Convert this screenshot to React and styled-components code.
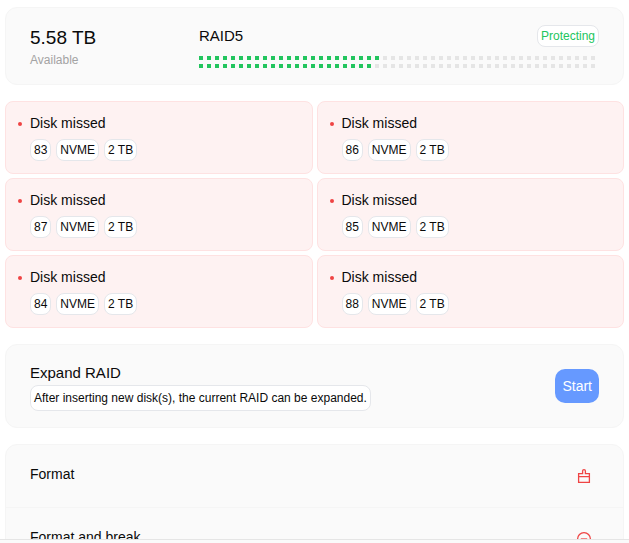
import styled, { createGlobalStyle } from 'styled-components';

const GlobalStyle = createGlobalStyle`
  * {
    box-sizing: border-box;
  }

  body {
    margin: 0;
    background: #ffffff;
    color: #0a0a0a;
    font-family: 'Liberation Sans', Arial, Helvetica, sans-serif;
    font-size: 14px;
    line-height: 20px;
  }

  h2, h3, p, ul {
    margin: 0;
    padding: 0;
    font-weight: 400;
  }

  button {
    border: 0;
    font: inherit;
    cursor: pointer;
  }
`;

const Page = styled.div`
  display: flex;
  flex-direction: column;
  height: 100vh;
`;

const Content = styled.main`
  flex: 1;
  min-height: 0;
  overflow: hidden;
  display: flex;
  flex-direction: column;
  gap: 16px;
  padding: 7px 5px 0;

  > * {
    flex-shrink: 0;
  }
`;

const BottomBar = styled.footer`
  height: 4px;
  border-top: 1px solid #e5e5e5;
  background: #fafafa;
`;

const Card = styled.section`
  border: 1px solid #f5f5f5;
  border-radius: 12px;
  background: #fafafa;
`;

const SummaryCard = styled(Card)`
  display: grid;
  grid-template-columns: 169px 1fr;
  padding: 16px 24px;
`;

const Capacity = styled.h2`
  font-size: 19px;
  line-height: 28px;
`;

const Caption = styled.p`
  color: #a3a3a3;
  font-size: 12px;
  line-height: 16px;
`;

const SummaryHeader = styled.div`
  display: flex;
  justify-content: space-between;
  align-items: center;
`;

const Title = styled.h3`
  font-size: 15px;
  line-height: 24px;
`;

const Tag = styled.span`
  display: inline-block;
  padding: 0 3px;
  border: 1px solid #e5e7eb;
  border-radius: 8px;
  background: #ffffff;
  color: ${({ $color }) => $color || 'inherit'};
  font-size: 12px;
  line-height: ${({ $tall }) => ($tall ? '24px' : '20px')};
`;

const UsageGrid = styled.div`
  display: grid;
  grid-template-rows: 4px 4px;
  grid-auto-flow: column;
  grid-auto-columns: 1fr;
  row-gap: 4px;
  margin-top: 8px;
`;

const UsageCell = styled.span`
  width: 4px;
  background: ${({ $used }) => ($used ? '#22c55e' : '#e5e5e5')};
`;

const DiskGrid = styled.ul`
  display: grid;
  grid-template-columns: 1fr 1fr;
  gap: 4px;
  list-style: none;
`;

const DiskCard = styled.li`
  display: flex;
  gap: 8px;
  padding: 12px;
  border: 1px solid #fee2e2;
  border-radius: 8px;
  background: #fef2f2;
`;

const StatusDot = styled.span`
  width: 4px;
  height: 4px;
  margin-top: 8px;
  border-radius: 50%;
  background: #ef4444;
`;

const DiskName = styled.h3`
  font-size: 14px;
  line-height: 18px;
`;

const TagList = styled.div`
  display: flex;
  gap: 5px;
  margin-top: 7px;
`;

const ExpandCard = styled(Card)`
  display: flex;
  justify-content: space-between;
  align-items: center;
  padding: 16px 24px;
`;

const StartButton = styled.button`
  padding: 7px;
  border-radius: 10px;
  background: #6699ff;
  color: #ffffff;
`;

const ActionRow = styled.div`
  display: flex;
  justify-content: space-between;
  align-items: flex-start;
  padding: 19px 24px 23px;

  & + & {
    border-top: 1px solid #f5f5f5;
  }
`;

const ActionName = styled.h3`
  font-size: 14px;
  line-height: 20px;
`;

const IconButton = styled.button`
  display: flex;
  padding: 4px 7px 0;
  background: none;
  color: #ef4444;
`;

const disks = [83, 86, 87, 85, 84, 88];
const CELL_COUNT = 100;
const USED_CELLS = 45;

function BrushIcon() {
  return (
    <svg width="16" height="16" viewBox="0 0 16 16" fill="none" stroke="currentColor" strokeWidth="1.3" aria-hidden="true">
      <path d="M2.6 8.6V5.6h4V3a1.4 1.4 0 0 1 2.8 0v2.6h4v3zM2.6 8.6v5.8h10.8V8.6" />
    </svg>
  );
}

function MinusCircleIcon() {
  return (
    <svg width="16" height="16" viewBox="0 0 16 16" fill="none" stroke="currentColor" strokeWidth="1.3" aria-hidden="true">
      <circle cx="8" cy="8" r="6.4" />
      <path d="M4.8 8h6.4" />
    </svg>
  );
}

function Disk({ slot }) {
  return (
    <DiskCard>
      <StatusDot />
      <div>
        <DiskName>Disk missed</DiskName>
        <TagList>
          <Tag>{slot}</Tag>
          <Tag>NVME</Tag>
          <Tag>2 TB</Tag>
        </TagList>
      </div>
    </DiskCard>
  );
}

export default function App() {
  return (
    <>
      <GlobalStyle />
      <Page>
        <Content>
          <SummaryCard>
            <div>
              <Capacity>5.58 TB</Capacity>
              <Caption>Available</Caption>
            </div>
            <div>
              <SummaryHeader>
                <Title>RAID5</Title>
                <Tag $color="#22c55e">Protecting</Tag>
              </SummaryHeader>
              <UsageGrid>
                {Array.from({ length: CELL_COUNT }, (_, i) => (
                  <UsageCell key={i} $used={i < USED_CELLS} />
                ))}
              </UsageGrid>
            </div>
          </SummaryCard>

          <DiskGrid>
            {disks.map((slot) => (
              <Disk key={slot} slot={slot} />
            ))}
          </DiskGrid>

          <ExpandCard>
            <div>
              <Title>Expand RAID</Title>
              <Tag $tall>After inserting new disk(s), the current RAID can be expanded.</Tag>
            </div>
            <StartButton type="button">Start</StartButton>
          </ExpandCard>

          <Card>
            <ActionRow>
              <ActionName>Format</ActionName>
              <IconButton type="button" aria-label="Format">
                <BrushIcon />
              </IconButton>
            </ActionRow>
            <ActionRow>
              <ActionName>Format and break</ActionName>
              <IconButton type="button" aria-label="Format and break">
                <MinusCircleIcon />
              </IconButton>
            </ActionRow>
          </Card>
        </Content>
        <BottomBar />
      </Page>
    </>
  );
}
